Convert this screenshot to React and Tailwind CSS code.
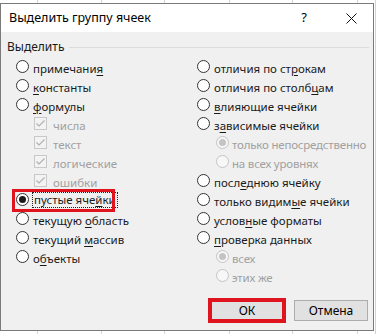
import React from "react";

const font = { fontFamily: '"Noto Sans", "Segoe UI", sans-serif' };

function Radio({ checked, disabled }) {
  return (
    <span
      className={`flex h-[13px] w-[13px] shrink-0 items-center justify-center rounded-full border ${
        disabled ? "border-[#c4c4c4] bg-[#f7f7f7]" : "border-[#333333] bg-white"
      }`}
    >
      {checked && (
        <span className={`h-[7px] w-[7px] rounded-full ${disabled ? "bg-[#c4c4c4]" : "bg-[#1a1a1a]"}`} />
      )}
    </span>
  );
}

function Check() {
  return (
    <span className="flex h-[13px] w-[13px] shrink-0 items-center justify-center border border-[#c8c8c8] bg-[#f3f3f3]">
      <svg width="11" height="11" viewBox="0 0 11 11">
        <path d="M1.5 5.5 L4 8 L9.5 2.5" fill="none" stroke="#b0b0b0" strokeWidth="1.2" />
      </svg>
    </span>
  );
}

function Label({ pre, u, post, disabled, tight }) {
  return (
    <span
      className={`whitespace-nowrap text-[11.5px] leading-[14px] ${tight ? "tracking-[-0.2px]" : ""} ${
        disabled ? "text-[#a0a0a0]" : "text-[#1a1a1a]"
      }`}
    >
      {pre}
      {u && <span className="underline decoration-1 underline-offset-[2px]">{u}</span>}
      {post}
    </span>
  );
}

function Row({ children, indent = 0 }) {
  return (
    <div className="flex h-[19px] items-center" style={{ paddingLeft: indent }}>
      {children}
    </div>
  );
}

function RadioRow({ pre, u, post, checked }) {
  return (
    <Row>
      <Radio checked={checked} />
      <span className="ml-[4px]">
        <Label pre={pre} u={u} post={post} />
      </span>
    </Row>
  );
}

function SubRadioRow({ text, checked }) {
  return (
    <Row indent={19}>
      <Radio checked={checked} disabled />
      <span className="ml-[3px]">
        <Label pre={text} disabled tight />
      </span>
    </Row>
  );
}

function CheckRow({ text }) {
  return (
    <Row indent={18}>
      <Check />
      <span className="ml-[6px]">
        <Label pre={text} disabled />
      </span>
    </Row>
  );
}

export default function App() {
  const cells = [38, 64, 63, 65, 63, 65, 18];
  return (
    <div className="relative h-[334px] w-[376px] overflow-hidden bg-white" style={font}>
      <div className="absolute inset-0 flex">
        {cells.map((w, i) => (
          <div key={i} className="h-full shrink-0 border-r border-[#d4d4d4]" style={{ width: w }} />
        ))}
      </div>
      <div className="relative mt-[3px] flex h-[328px] w-[374px] flex-col border border-[#7a7a7a] bg-[#f0f0f0]">
        <div className="flex h-[28px] items-center bg-white pl-[8px]">
          <span className="text-[12.5px] text-black">Выделить группу ячеек</span>
          <span className="ml-auto mr-[2px] w-[10px] text-center text-[13px] text-black">?</span>
          <svg className="ml-[35px] mr-[16px]" width="11" height="11" viewBox="0 0 11 11">
            <path d="M0.5 0.5 L10.5 10.5 M10.5 0.5 L0.5 10.5" stroke="#111" strokeWidth="1" />
          </svg>
        </div>
        <div className="mt-[7px] flex h-[16px] items-center pl-[6px] pr-[4px]">
          <span className="text-[12px] text-[#1a1a1a]">Выделить</span>
          <div className="ml-[5px] h-px flex-1 bg-[#dcdcdc]" />
        </div>
        <div className="mt-[2px] flex pl-[15px]">
          <div className="w-[181px]">
            <RadioRow pre="примечани" u="я" />
            <RadioRow u="к" post="онстанты" />
            <RadioRow u="ф" post="ормулы" />
            <CheckRow text="числа" />
            <CheckRow text="текст" />
            <CheckRow text="логические" />
            <CheckRow text="ошибки" />
            <div className="relative">
              <div className="pointer-events-none absolute left-[-4px] top-[-1px] h-[23px] w-[103px] border-[3px] border-[#e0141e]" />
              <Row>
                <Radio checked />
                <span className="ml-[3px] border border-dotted border-[#222] px-[1px] leading-[11px]">
                  <Label pre="пустые яче" u="й" post="ки" />
                </span>
              </Row>
            </div>
            <RadioRow pre="текущую " u="о" post="бласть" />
            <RadioRow pre="текущий " u="м" post="ассив" />
            <RadioRow pre="о" u="б" post="ъекты" />
          </div>
          <div className="flex-1">
            <RadioRow pre="отличия по ст" u="р" post="окам" />
            <RadioRow pre="отличия по столб" u="ц" post="ам" />
            <RadioRow u="в" post="лияющие ячейки" />
            <RadioRow pre="з" u="а" post="висимые ячейки" />
            <SubRadioRow text="только непосредственно" checked />
            <SubRadioRow text="на всех уровнях" />
            <RadioRow pre="посл" u="е" post="днюю ячейку" />
            <RadioRow pre="только видим" u="ы" post="е ячейки" />
            <RadioRow pre="услов" u="н" post="ые форматы" />
            <RadioRow u="п" post="роверка данных" />
            <SubRadioRow text="всех" checked />
            <SubRadioRow text="этих же" />
          </div>
        </div>
        <div className="mt-[15px] flex justify-end gap-[10px] pr-[5px]">
          <div className="relative">
            <button className="flex h-[21px] w-[74px] items-center justify-center border border-[#0078d7] bg-[#e1e1e1] text-[12px] text-black">
              ОК
            </button>
            <div className="pointer-events-none absolute inset-[-2px] border-[4px] border-[#e0141e]" />
          </div>
          <button className="flex h-[21px] w-[74px] items-center justify-center border border-[#adadad] bg-[#e1e1e1] text-[12px] text-black">
            Отмена
          </button>
        </div>
      </div>
    </div>
  );
}
